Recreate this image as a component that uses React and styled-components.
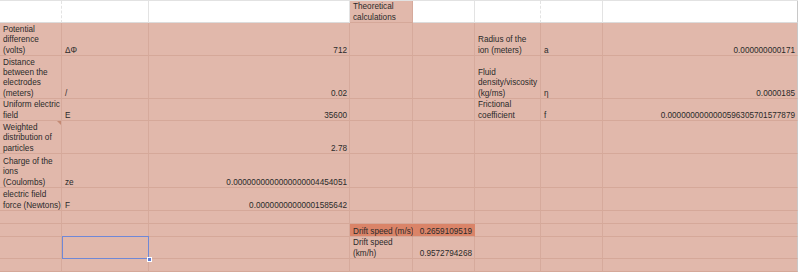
import styled, { createGlobalStyle, css } from "styled-components";

const GlobalStyle = createGlobalStyle`
  html, body {
    margin: 0;
    padding: 0;
    background: #ffffff;
  }
  body {
    font-family: "Liberation Sans", Arial, sans-serif;
  }
`;

const COLS = [62, 87, 201, 63, 62, 66, 62, 195];
const ROWS = [22, 33, 43, 22, 33, 34, 23, 13, 13, 22, 13];

// each row: 8 cells; a cell is null or { t, num, tone, sel, note }
const sheet = [
  [null, null, null, { t: "Theoretical\ncalculations", tone: "tint" }, null, null, null, null],
  [
    { t: "Potential\ndifference\n(volts)" },
    { t: "ΔΦ" },
    { t: "712", num: true },
    null,
    null,
    { t: "Radius of the\nion (meters)" },
    { t: "a" },
    { t: "0.000000000171", num: true },
  ],
  [
    { t: "Distance\nbetween the\nelectrodes\n(meters)" },
    { t: "/" },
    { t: "0.02", num: true },
    null,
    null,
    { t: "Fluid\ndensity/viscosity\n(kg/ms)" },
    { t: "η" },
    { t: "0.0000185", num: true },
  ],
  [
    { t: "Uniform electric\nfield" },
    { t: "E" },
    { t: "35600", num: true },
    null,
    null,
    { t: "Frictional\ncoefficient" },
    { t: "f" },
    { t: "0.0000000000000596305701577879", num: true },
  ],
  [
    { t: "Weighted\ndistribution of\nparticles", note: true },
    null,
    { t: "2.78", num: true },
    null,
    null,
    null,
    null,
    null,
  ],
  [
    { t: "Charge of the\nions\n(Coulombs)" },
    { t: "ze" },
    { t: "0.0000000000000000004454051", num: true },
    null,
    null,
    null,
    null,
    null,
  ],
  [
    { t: "electric field\nforce (Newtons)" },
    { t: "F" },
    { t: "0.00000000000001585642", num: true },
    null,
    null,
    null,
    null,
    null,
  ],
  [null, null, null, null, null, null, null, null],
  [
    null,
    null,
    null,
    { t: "Drift speed (m/s)", tone: "hot" },
    { t: "0.2659109519", num: true, tone: "hot" },
    null,
    null,
    null,
  ],
  [
    null,
    { t: "", sel: true },
    null,
    { t: "Drift speed\n(km/h)" },
    { t: "0.9572794268", num: true },
    null,
    null,
    null,
  ],
  [null, null, null, null, null, null, null, null],
];

const App = () => {
  return (
    <>
      <GlobalStyle />
      <Page>
        <Sheet>
          {sheet.map((row, r) =>
            row.map((cell, c) => {
              const header = r === 0;
              const tone = cell?.tone || (header ? "none" : "tint");
              return (
                <Cell
                  key={`${r}-${c}`}
                  $tone={tone}
                  $header={header}
                  $dashed={header && (c === 0 || c === 5)}
                  $last={c === COLS.length - 1}
                  $num={cell?.num}
                  $selected={cell?.sel}
                  $note={cell?.note}
                >
                  {cell?.t ? <Text>{cell.t}</Text> : null}
                </Cell>
              );
            })
          )}
        </Sheet>
      </Page>
    </>
  );
};

export default App;

const Page = styled.div`
  width: 800px;
  height: 272px;
  overflow: hidden;
  background: #ffffff;
`;

const Sheet = styled.div`
  display: grid;
  grid-template-columns: ${COLS.map((w) => `${w}px`).join(" ")};
  grid-template-rows: ${ROWS.map((h) => `${h}px`).join(" ")};
  width: 798px;
  border-top: 1px solid #e2e2e2;
  font-family: "Liberation Sans", Arial, sans-serif;
  font-size: 8.2px;
  line-height: 10.3px;
  color: #2a2a2a;
`;

const tones = {
  none: css`
    background: #ffffff;
    border-right-color: #e3e3e3;
    border-bottom-color: #dcdcdc;
  `,
  tint: css`
    background: #e1b8ab;
    border-right-color: #d6aa9c;
    border-bottom-color: #d5a899;
  `,
  hot: css`
    background: #da8468;
    border-right-color: #da8468;
    border-bottom-color: #d5a899;
  `,
};

const Cell = styled.div`
  box-sizing: border-box;
  display: flex;
  align-items: flex-end;
  justify-content: ${(p) => (p.$num ? "flex-end" : "flex-start")};
  min-width: 0;
  padding: 0 ${(p) => (p.$num ? "2px" : "0")} 0 ${(p) => (p.$num ? "0" : "3px")};
  border-right: 1px solid;
  border-bottom: 1px solid;
  ${(p) => tones[p.$tone]}
  ${(p) =>
    p.$header &&
    p.$tone !== "none" &&
    css`
      border-bottom-color: #d5a899;
    `}
  ${(p) =>
    p.$dashed &&
    css`
      border-right-style: dashed;
    `}
  ${(p) =>
    p.$last &&
    css`
      border-right-color: #c8c8c8;
    `}
  ${(p) =>
    p.$selected &&
    css`
      position: relative;
      &::after {
        content: "";
        position: absolute;
        top: -1px;
        left: 0;
        right: -1px;
        bottom: -1px;
        border: 1px solid #7088d6;
        pointer-events: none;
      }
      &::before {
        content: "";
        position: absolute;
        right: -4px;
        bottom: -4px;
        width: 5px;
        height: 5px;
        background: #5f7bd3;
        border: 1px solid #ffffff;
        box-sizing: border-box;
        z-index: 2;
      }
    `}
  ${(p) =>
    p.$note &&
    css`
      position: relative;
      &::before {
        content: "";
        position: absolute;
        top: 0;
        right: 0;
        border-top: 4px solid #c48a74;
        border-left: 4px solid transparent;
      }
    `}
`;

const Text = styled.span`
  display: block;
  white-space: pre;
  margin-bottom: -1px;
`;
